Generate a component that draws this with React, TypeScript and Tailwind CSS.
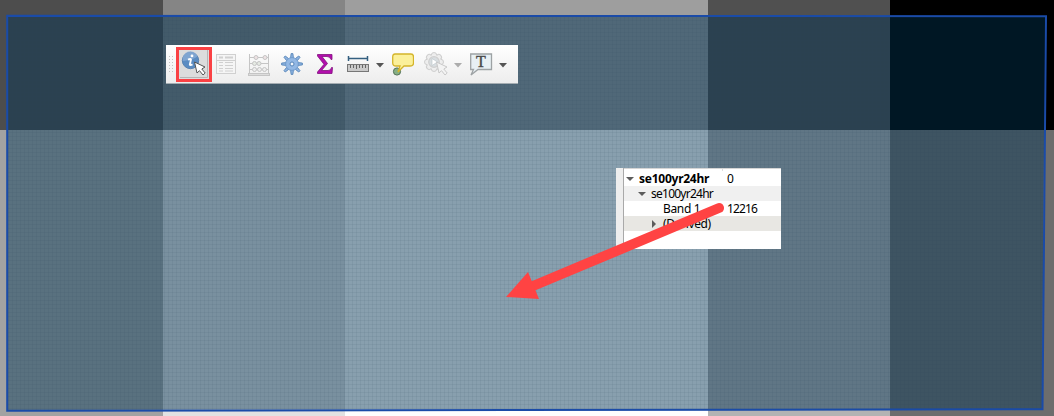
const outer = [
  'bg-[#4d4d4d]', 'bg-[#858585]', 'bg-[#9e9e9e]', 'bg-[#505050]', 'bg-black',
  'bg-[#a2a2a2]', 'bg-[#e2e2e2]', 'bg-[#fefefe]', 'bg-[#b3b3b3]', 'bg-[#6d6d6d]',
];
const inner = [
  'bg-[#2b4150]', 'bg-[#435b6a]', 'bg-[#506878]', 'bg-[#2b4150]', 'bg-[#001724]',
  'bg-[#59717f]', 'bg-[#79909f]', 'bg-[#889fae]', 'bg-[#607685]', 'bg-[#3e5462]',
];

function Raster({ colors }: { colors: string[] }) {
  return (
    <div className="grid h-[416px] w-[1054px] grid-cols-[163px_182px_363px_182px_164px] grid-rows-[130px_286px]">
      {colors.map((c, i) => <div key={i} className={c} />)}
    </div>
  );
}

function Extent() {
  return (
    <div className="absolute inset-0 [clip-path:polygon(8px_16px,1045px_17px,1042px_409px,8px_410px)]">
      <Raster colors={inner} />
      <svg className="absolute inset-0" width="1054" height="416">
        <defs>
          <pattern id="mesh" width="4" height="4" patternUnits="userSpaceOnUse">
            <path d="M0 .5H4M.5 0V4" stroke="#23445b" strokeOpacity=".08" />
          </pattern>
        </defs>
        <rect width="890" height="416" fill="url(#mesh)" />
        <rect x="890" y="130" width="164" height="286" fill="url(#mesh)" />
      </svg>
    </div>
  );
}

function Caret({ color }: { color: string }) {
  return <svg width="8" height="5" viewBox="0 0 8 5"><path d="M0 0H8L4 4.5Z" fill={color} /></svg>;
}

function Cursor({ faded = false }: { faded?: boolean }) {
  return (
    <path
      d="M14.5 12L17 23L19.5 20.7L23 25L25.2 23L21.8 19L25 17Z"
      fill={faded ? '#f3f3f3' : '#fff'} stroke={faded ? '#c9c9c9' : '#555'} strokeWidth="1"
    />
  );
}

function Toolbar() {
  return (
    <div className="absolute left-[166px] top-[45px] flex h-[39px] w-[352px] items-center border-b border-[#a5adb2] bg-gradient-to-b from-white to-[#ededed]">
      <svg className="mt-0.5 ml-[3px]" width="5" height="18">
        {[0, 3, 6, 9, 12, 15].map((y) => (
          <path key={y} d={`M0 ${y + .5}h1M3 ${y + .5}h1`} stroke="#c3c3c3" />
        ))}
      </svg>
      <div className="ml-0.5 flex h-[35px] w-9 shrink-0 items-center justify-center border-[3px] border-[#fa4144] bg-[#dcdcdc]">
        <svg className="shrink-0" width="28" height="28" viewBox="0 0 28 28">
          <path d="M0 27.5H27.5V0" fill="none" stroke="#b5b5b5" />
          <circle cx="10.5" cy="10.5" r="8.2" fill="#5b8cc2" stroke="#5a83b2" />
          <path d="M3 11A7.5 7.5 0 0 1 17.5 6.5Q13 10 3 11Z" fill="#8eafd7" opacity=".7" />
          <circle cx="12" cy="5.9" r="1.4" fill="white" />
          <path d="M8 9.6Q10.8 8.4 11 9.6L9.8 14.5Q10 15.8 12.5 14.4" fill="none" stroke="white" strokeWidth="1.8" />
          <Cursor />
        </svg>
      </div>
      <svg className="ml-1" width="20" height="20" viewBox="0 0 20 20" fill="none" stroke="#d0d0d0">
        <rect x=".5" y=".5" width="19" height="19" fill="#f5f5f5" />
        <path d="M3 3.5H7M9 3.5H17" strokeWidth="2" />
        <path d="M1 6.5H19M3 8.5H7M9 8.5H17M3 11.5H7M9 11.5H17M3 14.5H7M9 14.5H17M3 17H7M9 17H17" />
      </svg>
      <svg className="ml-3 mt-0.5" width="22" height="22" viewBox="0 0 22 22" fill="none" stroke="#c5c5c5">
        <path d="M1.5 0V20M20.5 0V20M2 3.5H20M2 9.5H20M2 15.5H20" />
        <rect x=".5" y="19.5" width="21" height="2" fill="#ddd" />
        <g fill="#eee2e3"><circle cx="8" cy="3.5" r="2" /><circle cx="17" cy="3.5" r="2" /></g>
        <g fill="#e5eae3"><circle cx="6.5" cy="9.5" r="2" /><circle cx="11" cy="9.5" r="2" /></g>
        <g fill="#eee"><circle cx="6.5" cy="15.5" r="2" /><circle cx="11.5" cy="15.5" r="2" /><circle cx="16.5" cy="15.5" r="2" /></g>
      </svg>
      <svg className="ml-[11px]" width="22" height="22" viewBox="0 0 22 22">
        {[0, 45, 90, 135, 180, 225, 270, 315].map((a) => (
          <path key={a} transform={`rotate(${a} 11 11)`} d="M9.6 5L10.1 .6H11.9L12.4 5" fill="#8fb5e3" stroke="#5684b7" strokeWidth=".9" />
        ))}
        <circle cx="11" cy="11" r="6.4" fill="#93b8e4" stroke="#6f9acb" />
        <circle cx="11" cy="11" r="2" fill="#f3f7fb" stroke="#5684b7" />
      </svg>
      <svg className="ml-[14px]" width="16" height="20" viewBox="0 0 16 20">
        <path d="M.5.5H15V5.5H14Q13 2.5 10 2.5H5L10.5 9.5L4.5 16.5H11Q14 16.5 14.5 13.5H15.5L15 19.5H.5V18L7 10.3L.5 2Z" fill="#b20eac" stroke="#82127e" strokeWidth=".8" />
      </svg>
      <svg className="ml-[14px]" width="23" height="17" viewBox="0 0 23 17">
        <path d="M1.5 2.5H20.5M1.5 0V5M20.5 0V5" stroke="#356081" strokeWidth="1.5" />
        <rect x=".5" y="8.5" width="21" height="7" fill="#cacaca" stroke="#777" />
        <path d="M3.5 9V12M6.5 9V12M9.5 9V13M12.5 9V12M15.5 9V12M18.5 9V12" stroke="#656565" />
      </svg>
      <div className="mt-0.5 ml-1.5"><Caret color="#555" /></div>
      <svg className="ml-2" width="22" height="23" viewBox="0 0 22 23">
        <circle cx="5" cy="18.5" r="3.6" fill="#86af84" stroke="#547157" />
        <path d="M3 1H19Q21.5 1 21.5 4V10Q21.5 13 18 13H12L6 19L8 13H4Q.7 13 .7 10V4Q.7 1 3 1Z" fill="#fbf09a" stroke="#d4b42a" strokeWidth="1.3" />
      </svg>
      <svg className="ml-2.5" width="24" height="24" viewBox="0 0 24 24" fill="#ededed" stroke="#cfcfcf">
        {[0, 45, 90, 135, 180, 225, 270, 315].map((a) => (
          <circle key={a} cx="10" cy="3.2" r="2.7" transform={`rotate(${a} 10 10)`} />
        ))}
        <circle cx="10" cy="10" r="7" fill="#efefef" stroke="none" />
        <circle cx="10" cy="10" r="5.3" strokeWidth="1.2" fill="#d9dee1" />
        <path d="M8 6.5L13.5 10L8 13.5Z" fill="#fff" stroke="#b9c2c7" strokeWidth=".6" />
        <g transform="translate(-2 -2)"><Cursor faded /></g>
      </svg>
      <div className="mt-0.5 ml-[6px]"><Caret color="#acacac" /></div>
      <svg className="ml-2" width="23" height="23" viewBox="0 0 23 23">
        <path d="M.7 1H21.5V16.5H8L1 22L3.5 16.5H.7Z" fill="#e8f0f4" stroke="#9da2a4" strokeWidth="1.3" />
        <text x="11" y="13.5" textAnchor="middle" fontFamily="Liberation Serif, serif" fontSize="16" fill="#4a4a4a" stroke="#4a4a4a" strokeWidth=".4">T</text>
      </svg>
      <div className="mt-0.5 ml-1.5"><Caret color="#555" /></div>
    </div>
  );
}

function TreeRow({ pad, name, value, open = true, leaf = false, className = '' }: {
  pad: string; name: string; value?: string; open?: boolean; leaf?: boolean; className?: string;
}) {
  return (
    <div className={`flex h-[15px] items-center ${className}`}>
      <div className={`flex w-[101px] shrink-0 items-center whitespace-nowrap ${pad}`}>
        <svg className="mr-[5px] shrink-0" width="8" height="8">
          {!leaf && <path d={open ? 'M0 2H8L4 6Z' : 'M2 0V8L6 4Z'} fill="#5c5c5c" />}
        </svg>
        <span>{name}</span>
      </div>
      <span className="pl-0.5 tracking-[-0.85px]">{value}</span>
    </div>
  );
}

function Results() {
  return (
    <div className="absolute left-[616px] top-[168px] flex h-[81px] w-[165px] overflow-hidden bg-white font-['Noto_Sans',sans-serif] text-[12px] leading-[15px] tracking-[-0.35px] text-black">
      <div className="w-2 shrink-0 border-r border-[#a9a9a9] bg-[#eeeeee]" />
      <div className="flex-1">
        <div className="flex h-[3px] border-t border-[#d5d5d5]"><span className="w-[99px] border-r border-[#ddd]" /></div>
        <TreeRow pad="pl-[2px]" name="se100yr24hr" value="0" className="[&>div]:font-bold [&>div]:tracking-[-0.25px]" />
        <TreeRow pad="pl-[14px]" name="se100yr24hr" className="bg-[#f0f0f0] tracking-[-0.75px]" />
        <TreeRow pad="pl-[26px]" name="Band 1" value="12216" leaf />
        <TreeRow pad="pl-[26px]" name="(Derived)" open={false} className="bg-[#e8e7e3]" />
      </div>
    </div>
  );
}

export default function App() {
  return (
    <main className="relative h-[416px] w-[1054px] overflow-hidden">
      <Raster colors={outer} />
      <Extent />
      <svg className="absolute inset-0" width="1054" height="416">
        <path d="M7.2 15.8L1046 16.2L1042.5 409.2L7.2 410.8Z" fill="none" stroke="#1a4ba8" strokeWidth="2" />
      </svg>
      <Toolbar />
      <Results />
      <svg className="absolute inset-0" width="1054" height="416">
        <path d="M719 208L533 286" stroke="#ff4343" strokeWidth="10" strokeLinecap="round" />
        <path d="M506 297L528 272L539 299Z" fill="#ff4343" />
      </svg>
    </main>
  );
}
